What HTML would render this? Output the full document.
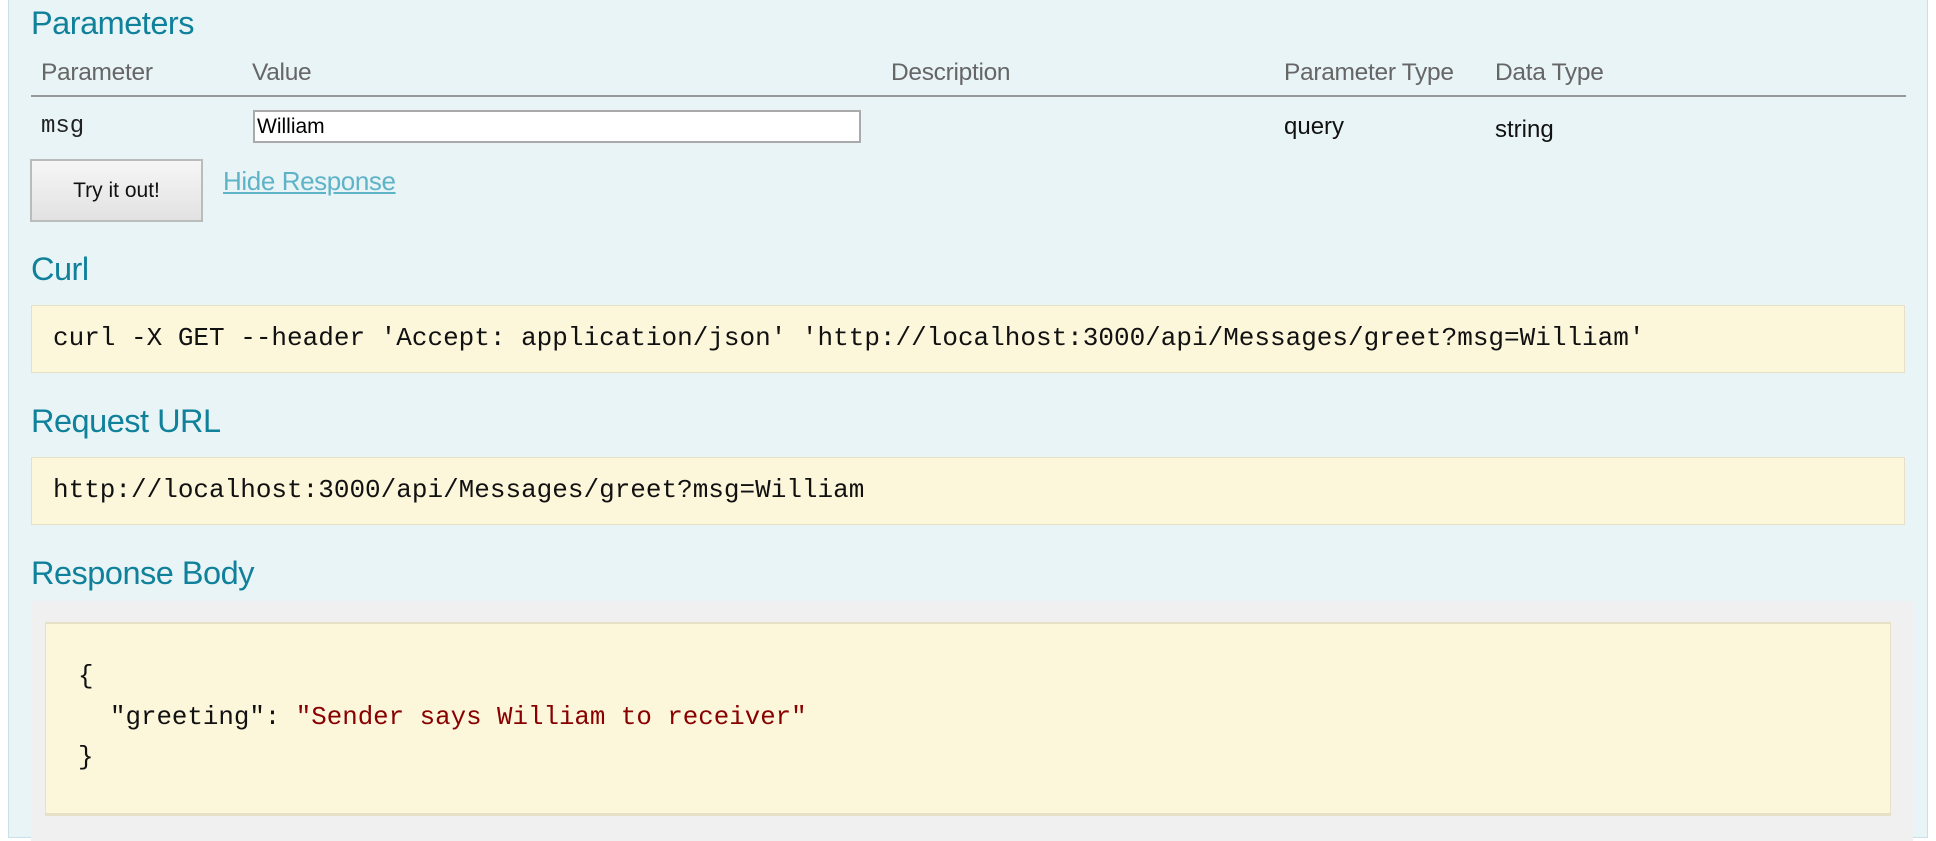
<!DOCTYPE html>
<html><head><meta charset="utf-8"><style>
*{margin:0;padding:0;box-sizing:border-box}
body{width:1936px;height:828px;overflow:hidden;background:#fff;font-family:"Liberation Sans",sans-serif;position:relative}
.panel{position:absolute;left:8px;top:-2px;width:1920px;height:840px;background:#e9f4f7;border:1px solid #c8e0e7}
.a{position:absolute;white-space:nowrap}
h4{position:absolute;font-weight:normal;font-size:32.5px;color:#10819b;white-space:nowrap;letter-spacing:-0.5px}
.th{font-size:24.5px;color:#666;letter-spacing:-0.3px}
.mono{font-family:"Liberation Mono",monospace}
.box{position:absolute;left:31px;width:1874px;background:#fcf6db;border:1px solid #e5e0c6}
</style></head><body>
<div class="panel"></div>
<h4 style="left:31px;top:5px">Parameters</h4>
<div class="a th" style="left:41px;top:59px">Parameter</div>
<div class="a th" style="left:252px;top:59px">Value</div>
<div class="a th" style="left:891px;top:59px">Description</div>
<div class="a th" style="left:1284px;top:59px">Parameter Type</div>
<div class="a th" style="left:1495px;top:59px">Data Type</div>
<div class="a" style="left:31px;top:95px;width:1875px;height:2px;background:#999"></div>
<div class="a mono" style="left:41px;top:113px;font-size:24px;color:#222">msg</div>
<div class="a" style="left:1284px;top:113px;font-size:24px;color:#111">query</div>
<div class="a" style="left:1495px;top:116px;font-size:24px;color:#111">string</div>
<div class="a" style="left:253px;top:110px;width:608px;height:33px;background:#fff;border:2px solid #aaa;font-size:21px;padding:3px 2px;color:#000">William</div>
<div class="a" style="left:30px;top:159px;width:173px;height:63px;border:2px solid #bbb;background:linear-gradient(#f6f6f6,#e2e2e2);font-size:21px;text-align:center;line-height:59px;color:#111">Try it out!</div>
<div class="a" style="left:223px;top:166px;font-size:26px;color:#5fb3c7;text-decoration:underline;letter-spacing:-0.4px">Hide Response</div>
<h4 style="left:31px;top:251px">Curl</h4>
<div class="box" style="top:305px;height:68px"></div>
<div class="a mono" style="left:53px;top:323px;font-size:26px;color:#111">curl -X GET --header 'Accept: application/json' 'http://localhost:3000/api/Messages/greet?msg=William'</div>
<h4 style="left:31px;top:403px">Request URL</h4>
<div class="box" style="top:457px;height:68px"></div>
<div class="a mono" style="left:53px;top:475px;font-size:26px;color:#111">http://localhost:3000/api/Messages/greet?msg=William</div>
<h4 style="left:31px;top:555px">Response Body</h4>
<div class="a" style="left:31px;top:601px;width:1882px;height:240px;background:#f0f0f0"></div>
<div class="a" style="left:45px;top:622px;width:1846px;height:194px;background:#fcf6db;border-top:2px solid #e5e0c6;border-bottom:3px solid #e5e0c6;border-left:1px solid #e5e0c6;border-right:1px solid #e5e0c6"></div>
<div class="a mono" style="left:78px;top:662px;font-size:25.8px;color:#111">{</div>
<div class="a mono" style="left:110px;top:703px;font-size:25.8px;color:#111">"greeting": <span style="color:#880000">"Sender says William to receiver"</span></div>
<div class="a mono" style="left:78px;top:743px;font-size:25.8px;color:#111">}</div>
</body></html>
